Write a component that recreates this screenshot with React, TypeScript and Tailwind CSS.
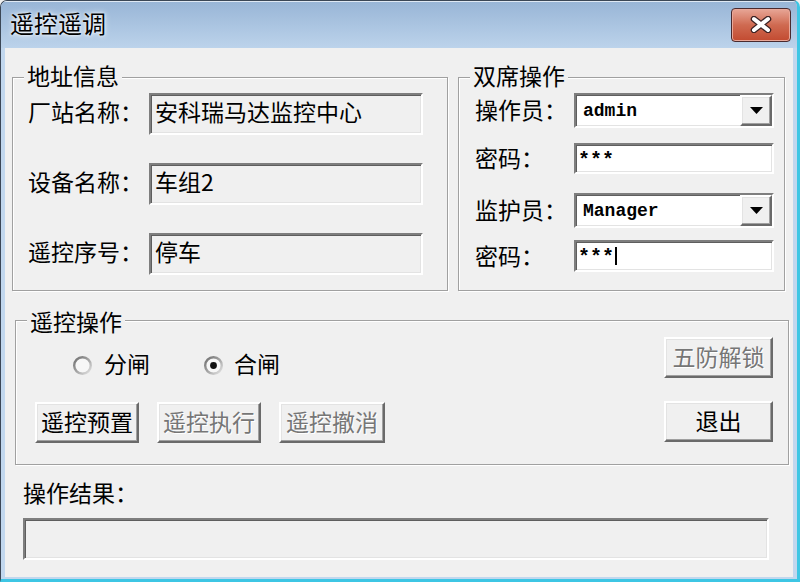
import React from "react"

const sunken =
  "border-2 border-t-[#7e7e7e] border-l-[#7e7e7e] border-b-white border-r-white shadow-[inset_1px_1px_0_#5e5e5e,inset_-1px_-1px_0_#e3e3e3]"
const raised =
  "border-2 border-t-white border-l-white border-b-[#6a6a6a] border-r-[#6a6a6a] shadow-[inset_-1px_-1px_0_#a0a0a0,inset_1px_1px_0_#e3e3e3] bg-[#f0f0f0]"

// ─── Pieces ─────────────────────────────────────────────────────────────────

function Group({
  title,
  legendTop,
  className,
  children,
}: {
  title: string
  legendTop: string
  className: string
  children: React.ReactNode
}) {
  return (
    <div
      className={`relative border border-[#a0a0a0] shadow-[inset_1px_1px_0_#fff,1px_1px_0_#fff] ${className}`}
    >
      <span
        className={`absolute left-[11px] px-[3px] bg-[#f0f0f0] text-[23px] leading-[26px] whitespace-nowrap ${legendTop}`}
      >
        {title}
      </span>
      {children}
    </div>
  )
}

function Button({ label, disabled, className = "" }: { label: string; disabled?: boolean; className?: string }) {
  return (
    <div
      className={`${raised} flex items-center justify-center pb-[3px] text-[23px] leading-none ${
        disabled ? "text-[#767676] [text-shadow:1px_1px_0_#fff]" : "text-black"
      } ${className}`}
    >
      {label}
    </div>
  )
}

function Radio({ checked }: { checked?: boolean }) {
  return (
    <svg width="21" height="21" viewBox="0 0 21 21">
      <defs>
        <linearGradient id="ring" x1="0" y1="0" x2="1" y2="1">
          <stop offset="0" stopColor="#6e6e6e" />
          <stop offset="0.55" stopColor="#a9a9a9" />
          <stop offset="1" stopColor="#e6e6e6" />
        </linearGradient>
      </defs>
      <circle cx="10.5" cy="10.5" r="8.3" fill="#f7f7f7" stroke="url(#ring)" strokeWidth="2.4" />
      {checked && <circle cx="10.5" cy="10.5" r="3.4" fill="#111" />}
    </svg>
  )
}

function Combo({ value, className }: { value: string; className: string }) {
  return (
    <div className={`${sunken} bg-white flex items-center w-[200px] ${className}`}>
      <span className="flex-1 pl-[7px] font-['Liberation_Mono',monospace] font-bold text-[18px] leading-none">
        {value}
      </span>
      <div className={`${raised} w-[32px] h-full flex items-center justify-center`}>
        <svg width="13" height="7" viewBox="0 0 13 7">
          <path d="M0 0h13L6.5 7z" fill="#000" />
        </svg>
      </div>
    </div>
  )
}

function Password({ caret, className }: { caret?: boolean; className: string }) {
  return (
    <div className={`${sunken} bg-white flex items-center w-[200px] pl-[2px] ${className}`}>
      <span className="font-['Liberation_Mono',monospace] font-bold text-[20px] leading-none pt-[4px]">***</span>
      {caret && <span className="ml-[1px] w-[2px] h-[18px] bg-black" />}
    </div>
  )
}

function ReadField({ value }: { value: string }) {
  return (
    <div className={`${sunken} bg-[#f0f0f0] w-[274px] h-[42px] flex items-center pl-[4px] pb-[5px] text-[23px] leading-none`}>
      {value}
    </div>
  )
}

// ─── Dialog ─────────────────────────────────────────────────────────────────

export default function App() {
  return (
    <div className="w-[800px] h-[582px] bg-[#f0f0f0] font-['Noto_Sans_CJK_SC','Noto_Sans',sans-serif] text-black">
      <div className="w-full h-full flex flex-col rounded-t-[7px] overflow-hidden border-l border-t border-[#3b4756] border-r-[3px] border-b-[3px] border-r-[#3ec6e4] border-b-[#3ec6e4] bg-[#c1d7ee]">
        {/* Title bar */}
        <div className="h-[47px] shrink-0 flex items-center justify-between pl-[9px] pr-[6px] bg-gradient-to-b from-[#98b5d6] to-[#bcd3eb] shadow-[inset_0_1px_0_#dfe9f4]">
          <span className="text-[24px] leading-none pb-[3px] [text-shadow:0_0_6px_#fff,0_0_3px_#fff]">遥控遥调</span>
          <div className="w-[60px] h-[34px] rounded-[4px] border border-[#4a2a2e] bg-gradient-to-b from-[#e7a697] via-[#cf6a51] to-[#c24a30] shadow-[inset_0_0_0_1px_#e9a899] flex items-center justify-center">
            <svg width="22" height="17" viewBox="0 0 22 17">
              <path d="M4 3l14 11M18 3L4 14" stroke="#3b2224" strokeWidth="6.5" strokeLinecap="round" />
              <path d="M4 3l14 11M18 3L4 14" stroke="#fff" strokeWidth="4" strokeLinecap="round" />
            </svg>
          </div>
        </div>

        {/* Client area */}
        <div className="flex-1 ml-[4px] mr-[4px] mb-[2px] bg-[#f0f0f0] flex flex-col">
          <div className="flex mt-[29px] ml-[7px] gap-[10px]">
            <Group title="地址信息" legendTop="-top-[16px]" className="w-[436px] h-[214px]">
              <div className="flex flex-col gap-[28px] pt-[15px] pl-[15px]">
                {[
                  ["厂站名称：", "安科瑞马达监控中心"],
                  ["设备名称：", "车组2"],
                  ["遥控序号：", "停车"],
                ].map(([label, value]) => (
                  <div key={label} className="flex items-center">
                    <span className="w-[121px] text-[23px] leading-none pb-[5px]">{label}</span>
                    <ReadField value={value} />
                  </div>
                ))}
              </div>
            </Group>

            <Group title="双席操作" legendTop="-top-[16px]" className="w-[327px] h-[214px]">
              <div className="flex flex-col pt-[15px] pl-[16px] text-[23px] leading-none">
                <div className="flex items-center">
                  <span className="w-[99px] pb-[2px]">操作员：</span>
                  <Combo value="admin" className="h-[35px]" />
                </div>
                <div className="flex items-center mt-[15px]">
                  <span className="w-[99px] pb-[2px]">密码：</span>
                  <Password className="h-[31px]" />
                </div>
                <div className="flex items-center mt-[19px]">
                  <span className="w-[99px] pb-[2px]">监护员：</span>
                  <Combo value="Manager" className="h-[35px]" />
                </div>
                <div className="flex items-center mt-[12px]">
                  <span className="w-[99px] pb-[2px]">密码：</span>
                  <Password caret className="h-[32px]" />
                </div>
              </div>
            </Group>
          </div>

          <Group title="遥控操作" legendTop="-top-[13px]" className="mt-[29px] ml-[10px] w-[774px] h-[145px]">
            <div className="flex justify-between pl-[19px] pr-[15px]">
              <div className="flex flex-col pt-[31px]">
                <div className="flex items-center h-[26px] ml-[37px] text-[23px] leading-none">
                  <div className="flex items-center gap-[11px] w-[131px]">
                    <Radio />
                    <span className="pb-[3px]">分闸</span>
                  </div>
                  <div className="flex items-center gap-[10px]">
                    <Radio checked />
                    <span className="pb-[3px]">合闸</span>
                  </div>
                </div>
                <div className="flex gap-[18px] mt-[24px]">
                  <Button label="遥控预置" className="w-[104px] h-[41px]" />
                  <Button label="遥控执行" disabled className="w-[104px] h-[41px]" />
                  <Button label="遥控撤消" disabled className="w-[106px] h-[41px]" />
                </div>
              </div>
              <div className="flex flex-col pt-[16px] gap-[23px]">
                <Button label="五防解锁" disabled className="w-[109px] h-[41px]" />
                <Button label="退出" className="w-[109px] h-[41px]" />
              </div>
            </div>
          </Group>

          <span className="mt-[14px] ml-[18px] text-[23px] leading-[26px]">操作结果：</span>
          <div className={`${sunken} mt-[13px] ml-[18px] w-[746px] h-[42px] bg-[#f0f0f0]`} />
        </div>
      </div>
    </div>
  )
}
